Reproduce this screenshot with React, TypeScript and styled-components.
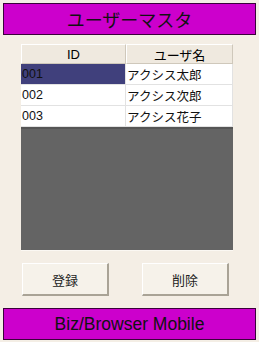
import React from "react";
import styled, { createGlobalStyle } from "styled-components";

const GlobalStyle = createGlobalStyle`
  html, body {
    margin: 0;
    padding: 0;
    background: #f4eee5;
  }
  * {
    box-sizing: border-box;
  }
`;

const FONT = `"Liberation Sans", "Noto Sans CJK JP", sans-serif`;

const Screen = styled.div`
  width: 259px;
  height: 342px;
  padding: 3px 3px 2px 3px;
  display: flex;
  flex-direction: column;
  background: #f4eee5;
  font-family: ${FONT};
  color: #000;
`;

const Bar = styled.div<{ $size: number }>`
  height: 32px;
  background: #cc00cc;
  border: 1px solid #3a003a;
  display: flex;
  align-items: center;
  justify-content: center;
  font-size: ${(p) => p.$size}px;
  color: #111;
`;

const Grid = styled.div`
  margin: 9px 0 0 18px;
  width: 212px;
  height: 207px;
  display: flex;
  flex-direction: column;
  background: #646464;
  border-bottom: 1px solid #fbf8f3;
`;

const Row = styled.div`
  display: grid;
  grid-template-columns: 105px 107px;
`;

const HeadCell = styled.div`
  height: 20px;
  background: #efe9df;
  border-top: 1px solid #ffffff;
  border-left: 1px solid #ffffff;
  border-right: 1px solid #cfc8bb;
  border-bottom: 1px solid #cfc8bb;
  display: flex;
  align-items: center;
  justify-content: center;
  font-size: 13px;
`;

const Cell = styled.div<{ $selected?: boolean }>`
  height: 21px;
  padding-left: 1px;
  display: flex;
  align-items: center;
  font-size: 12.5px;
  background: ${(p) => (p.$selected ? "#40407c" : "#ffffff")};
  color: #111;
  border-bottom: 1px solid #e2e2e2;
  border-right: 1px solid #e2e2e2;
`;

const Blank = styled.div`
  flex: 1;
  border-top: 2px solid #555555;
`;

const Buttons = styled.div`
  margin: 12px 0 0 19px;
  display: grid;
  grid-template-columns: 87px 87px;
  column-gap: 33px;
`;

const Button = styled.button`
  height: 33px;
  background: #f6f2ea;
  border: none;
  border-top: 1px solid #ffffff;
  border-left: 1px solid #ffffff;
  border-right: 2px solid #a9a396;
  border-bottom: 2px solid #a9a396;
  font-family: ${FONT};
  font-size: 13px;
  color: #222;
  padding: 0;
`;

const Spacer = styled.div`
  flex: 1;
`;

const rows = [
  { id: "001", name: "アクシス太郎" },
  { id: "002", name: "アクシス次郎" },
  { id: "003", name: "アクシス花子" },
];

export default function App() {
  return (
    <>
      <GlobalStyle />
      <Screen>
        <Bar $size={18}>ユーザーマスタ</Bar>
        <Grid>
          <Row>
            <HeadCell>ID</HeadCell>
            <HeadCell>ユーザ名</HeadCell>
          </Row>
          {rows.map((r, i) => (
            <Row key={r.id}>
              <Cell $selected={i === 0}>{r.id}</Cell>
              <Cell>{r.name}</Cell>
            </Row>
          ))}
          <Blank />
        </Grid>
        <Buttons>
          <Button>登録</Button>
          <Button>削除</Button>
        </Buttons>
        <Spacer />
        <Bar $size={17.5}>Biz/Browser Mobile</Bar>
      </Screen>
    </>
  );
}
